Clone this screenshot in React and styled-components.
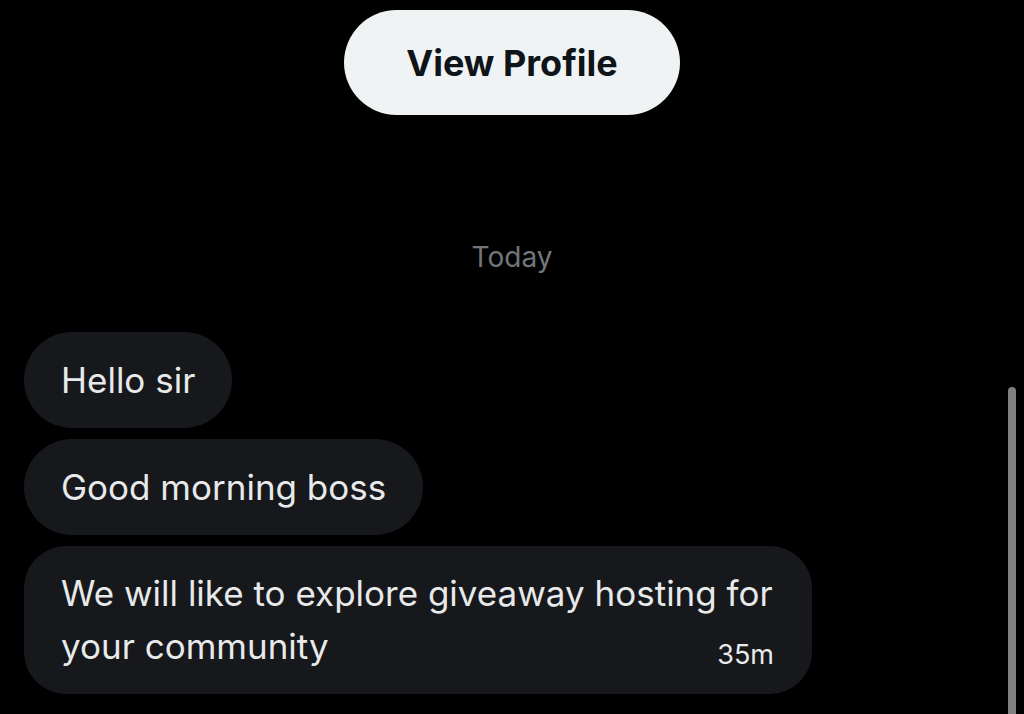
import React from "react";
import styled, { createGlobalStyle } from "styled-components";

const GlobalStyle = createGlobalStyle`
  html, body {
    margin: 0;
    padding: 0;
    background: #000;
    overflow: hidden;
  }
  body {
    font-family: Inter, "Noto Sans", "Liberation Sans", sans-serif;
    color: #e7e9ea;
  }
`;

// lines are kept as they wrap in the screenshot
const messages = [
  { id: 1, lines: ["Hello sir"] },
  { id: 2, lines: ["Good morning boss"] },
  {
    id: 3,
    lines: ["We will like to explore giveaway hosting for", "your community"],
    time: "35m",
  },
];

export default function App() {
  return (
    <>
      <GlobalStyle />
      <Screen>
        <Header>
          <ProfileButton>View Profile</ProfileButton>
        </Header>
        <DateLabel>Today</DateLabel>
        <MessageList>
          {messages.map((m) => (
            <Bubble key={m.id} wide={!!m.time}>
              {m.lines.map((line, i) => {
                const last = i === m.lines.length - 1;
                if (last && m.time) {
                  return (
                    <LastRow key={i}>
                      <Line>{line}</Line>
                      <Time>{m.time}</Time>
                    </LastRow>
                  );
                }
                return <Line key={i}>{line}</Line>;
              })}
            </Bubble>
          ))}
        </MessageList>
        <ScrollThumb />
      </Screen>
    </>
  );
}

const Screen = styled.div`
  position: relative;
  width: 1024px;
  height: 714px;
  background: #000;
  display: flex;
  flex-direction: column;
  overflow: hidden;
`;

const Header = styled.div`
  display: flex;
  justify-content: center;
  padding-top: 10px;
`;

const ProfileButton = styled.button`
  width: 336px;
  height: 105px;
  border: none;
  border-radius: 53px;
  background: #eff3f4;
  color: #0f1419;
  font-family: Inter, "Noto Sans", "Liberation Sans", sans-serif;
  font-size: 36px;
  font-weight: 700;
  cursor: pointer;
`;

const DateLabel = styled.div`
  margin-top: 126px;
  text-align: center;
  color: #71767b;
  font-size: 28px;
  line-height: 32px;
`;

const MessageList = styled.div`
  display: flex;
  flex-direction: column;
  align-items: flex-start;
  gap: 11px;
  padding: 0 24px;
  margin-top: 59px;
`;

const Bubble = styled.div`
  box-sizing: border-box;
  background: #16181c;
  border-radius: ${({ wide }) => (wide ? "42px" : "48px")};
  min-height: 96px;
  padding: ${({ wide }) => (wide ? "21px 38px 21px 37px" : "0 37px")};
  display: flex;
  flex-direction: column;
  justify-content: center;
  width: ${({ wide }) => (wide ? "788px" : "auto")};
`;

const Line = styled.div`
  font-size: 35px;
  line-height: 53px;
  color: #e7e9ea;
  white-space: nowrap;
`;

const LastRow = styled.div`
  display: flex;
  justify-content: space-between;
  align-items: flex-end;
`;

const Time = styled.span`
  font-size: 27px;
  line-height: 32px;
  color: #e7e9ea;
  margin-bottom: 2px;
`;

const ScrollThumb = styled.div`
  position: absolute;
  right: 8px;
  top: 387px;
  width: 8px;
  height: 360px;
  border-radius: 4px;
  background: #808080;
`;
